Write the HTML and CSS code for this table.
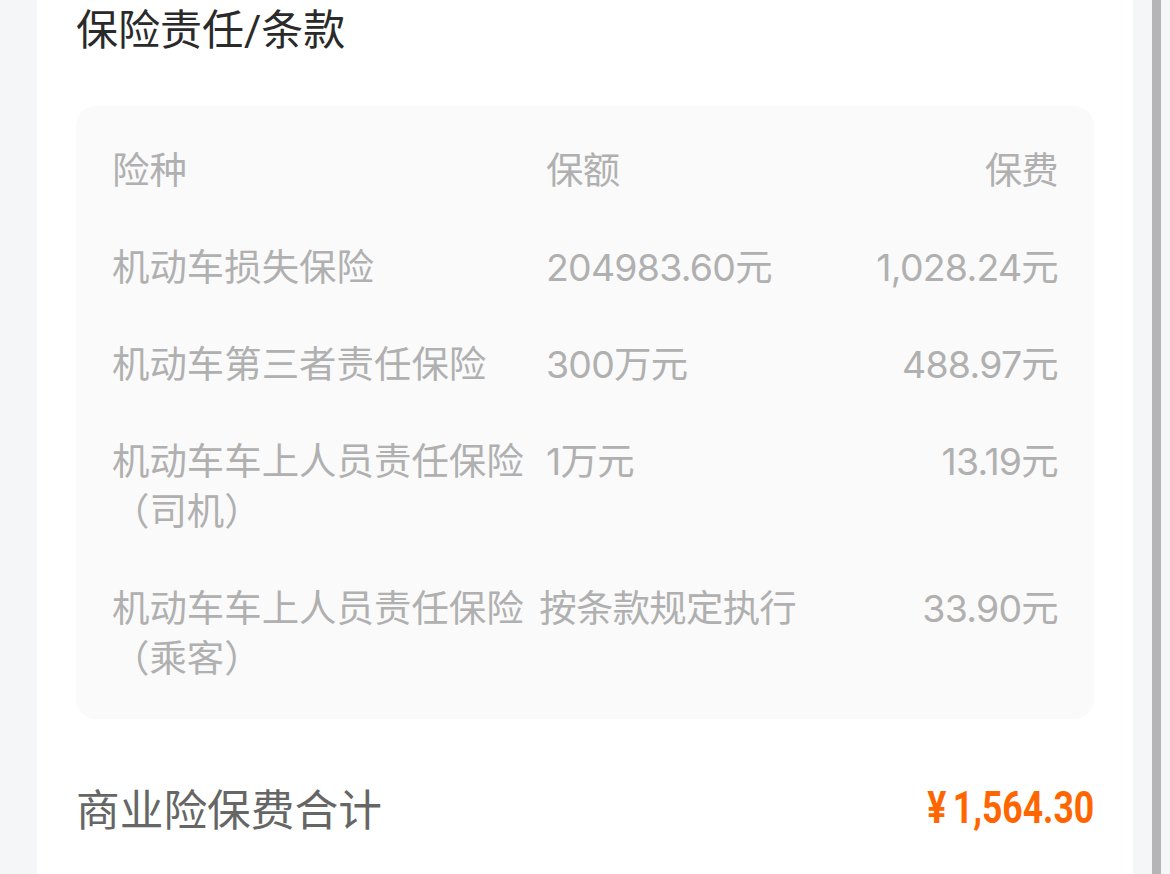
FILE: index.html
```html
<!DOCTYPE html>
<html lang="zh-CN">
<head>
    <meta charset="UTF-8">
    <meta name="viewport" content="width=device-width, initial-scale=1.0">
    <title>保险责任/条款</title>
    <link rel="stylesheet" href="styles.css">
</head>
<body>
    <main class="card">
        <h2 class="section-title">保险责任/条款</h2>
        <div class="coverage">
            <div class="coverage-row">
                <div class="col-name">险种</div>
                <div class="col-amount">保额</div>
                <div class="col-fee">保费</div>
            </div>
            <div class="coverage-row">
                <div class="col-name">机动车损失保险</div>
                <div class="col-amount">204983.60元</div>
                <div class="col-fee">1,028.24元</div>
            </div>
            <div class="coverage-row">
                <div class="col-name">机动车第三者责任保险</div>
                <div class="col-amount">300万元</div>
                <div class="col-fee">488.97元</div>
            </div>
            <div class="coverage-row">
                <div class="col-name">机动车车上人员责任保险（司机）</div>
                <div class="col-amount">1万元</div>
                <div class="col-fee">13.19元</div>
            </div>
            <div class="coverage-row">
                <div class="col-name">机动车车上人员责任保险（乘客）</div>
                <div class="col-amount">按条款规定执行</div>
                <div class="col-fee">33.90元</div>
            </div>
        </div>
        <div class="total">
            <span class="total-label">商业险保费合计</span>
            <span class="total-price"><span class="currency">¥</span>1,564.30</span>
        </div>
    </main>
    <div class="scrollbar"></div>
</body>
</html>
```

FILE: styles.css
```css
html, body {
    margin: 0;
    height: 100vh;
    overflow: hidden;
    background-color: #f5f6f8;
    font-family: 'Roboto', 'Noto Sans CJK SC', sans-serif;
    -webkit-font-smoothing: antialiased;
}
.card {
    width: 1096px;
    margin-left: 37px;
    padding: 0 39px 80px;
    box-sizing: border-box;
    background-color: #fff;
}
.section-title {
    margin: 0;
    font-size: 42px;
    line-height: 62px;
    font-weight: 400;
    color: #2a2a2a;
}
.coverage {
    display: flex;
    flex-direction: column;
    gap: 47px;
    margin-top: 44px;
    padding: 40px 36px 35px;
    background-color: #fafafa;
    border-radius: 20px;
    font-family: 'Inter', 'Noto Sans CJK SC', sans-serif;
    font-size: 37.44px;
    line-height: 50px;
    color: #b0b0b0;
}
.coverage-row {
    display: flex;
    align-items: flex-start;
}
.col-name {
    flex: 0 1 434px;
    min-width: 0;
}
.col-amount {
    flex: none;
    width: 250px;
    min-width: max-content;
    white-space: nowrap;
    letter-spacing: -0.02em;
}
.col-fee {
    flex: none;
    width: 262px;
    text-align: right;
    letter-spacing: -0.02em;
}
.total {
    display: flex;
    justify-content: space-between;
    align-items: center;
    margin-top: 58px;
    height: 60px;
}
.total-label {
    font-size: 43.7px;
    color: #666;
}
.total-price {
    display: inline-block;
    font-size: 45px;
    font-weight: 700;
    color: #ff6600;
    transform: scaleX(0.79);
    transform-origin: right center;
}
.currency {
    margin-right: 8px;
}
.scrollbar {
    position: fixed;
    top: 0;
    right: 9px;
    width: 9px;
    height: 100%;
    background-color: #b5b5b7;
}
```
